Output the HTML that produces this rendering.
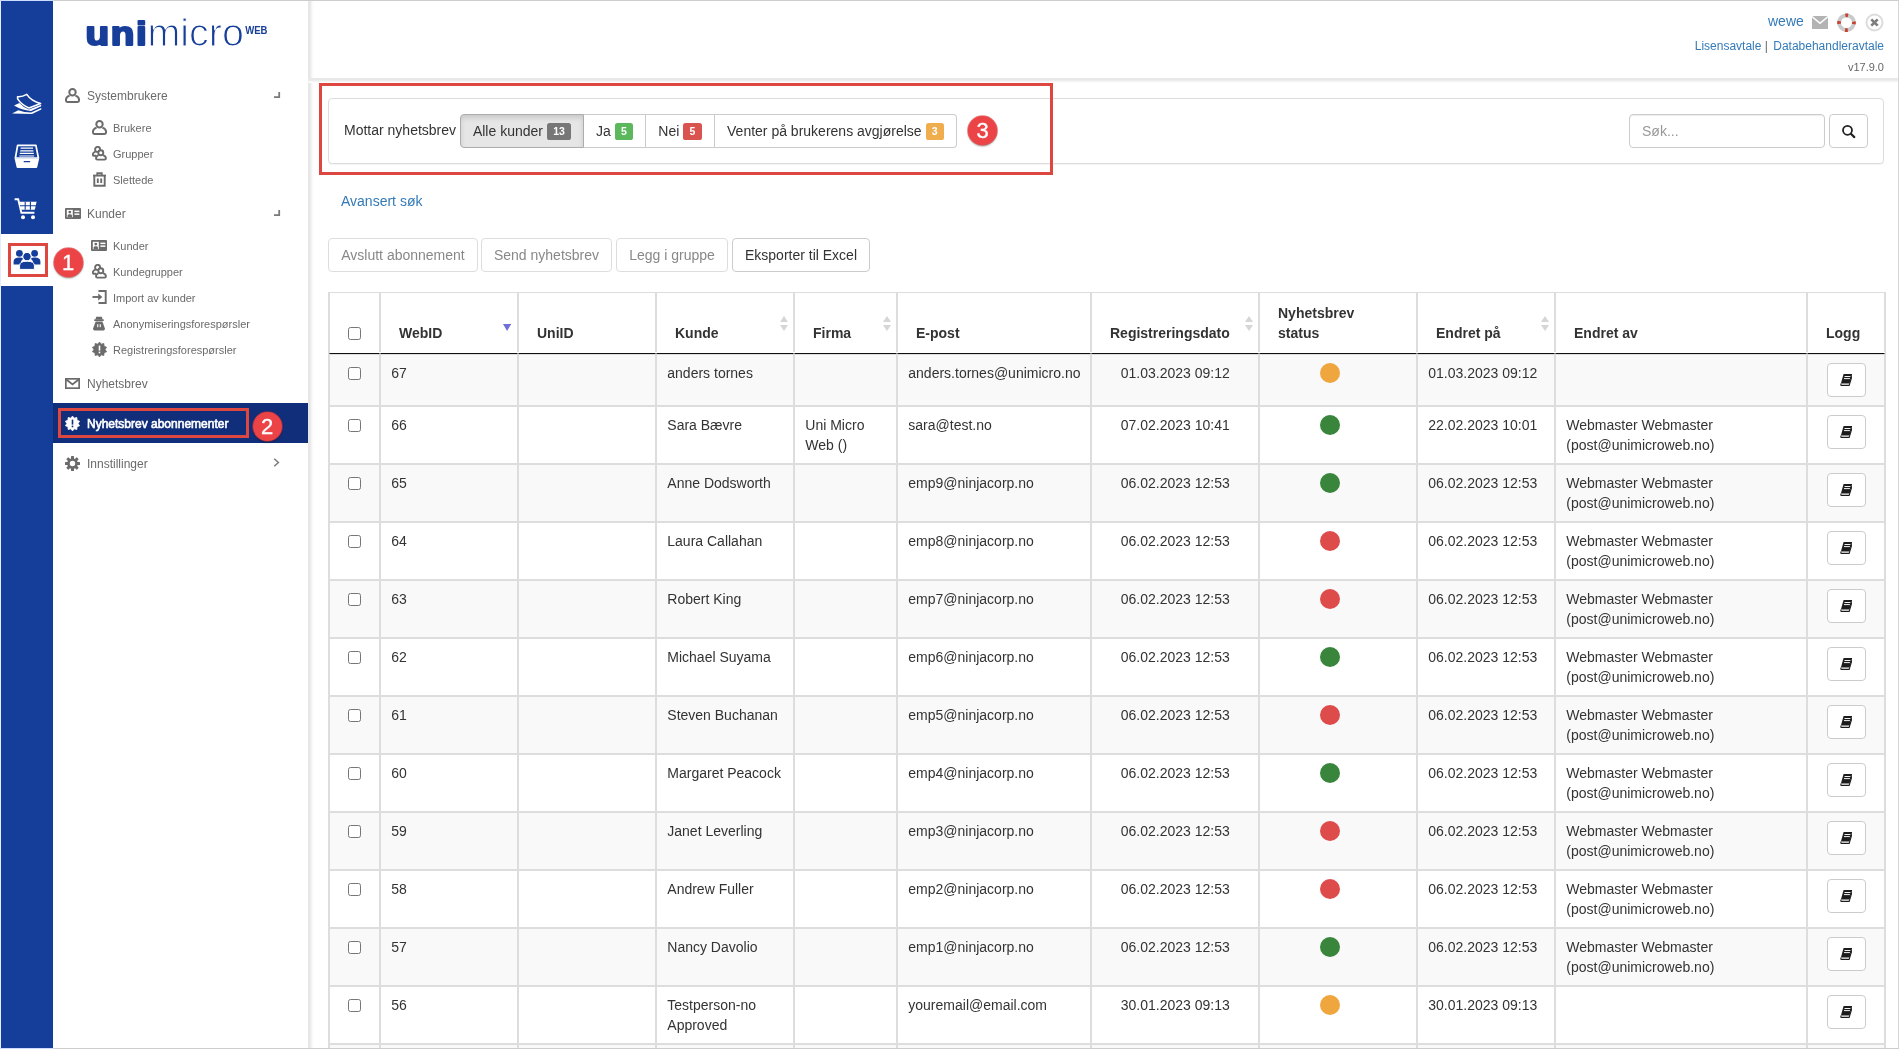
<!DOCTYPE html>
<html lang="no">
<head>
<meta charset="utf-8">
<title>Nyhetsbrev abonnementer</title>
<style>
*{box-sizing:border-box}
html,body{margin:0;padding:0}
body{width:1899px;height:1049px;overflow:hidden;background:#fff;font-family:"Liberation Sans",sans-serif;font-size:14px;line-height:20px;color:#333;position:relative}
a{color:#337ab7;text-decoration:none}
.abs{position:absolute;white-space:nowrap}
#frame{position:absolute;left:0;top:0;width:1899px;height:1049px;border:1px solid #cdcdcd;border-left-color:#e4ecff;border-right-color:#d6d6d6;pointer-events:none;z-index:50}
#frame i{position:absolute;left:-1px;width:54px;height:1px;background:#cbdcff}
#rail{position:absolute;left:1px;top:1px;width:52px;height:1047px;background:#153e9a}
#rail .act{position:absolute;left:0;top:233px;width:52px;height:52px;background:#fff}
#rail .ic{margin-left:-1px;margin-top:-1px}
#rail .redbox{margin-left:0}
#side{position:absolute;left:53px;top:1px;width:255px;height:1048px;background:#fff}
#sideedge{position:absolute;left:308px;top:1px;width:6px;height:1048px;background:linear-gradient(90deg,#e7e7e7 0,#e7e7e7 33%,#f0f0f0 50%,#f8f8f8 67%,#fcfcfc 84%,#fff 100%)}
#hdr{position:absolute;left:308px;top:78px;width:1590px;height:5px;background:linear-gradient(180deg,#e8e8e8 0,#e8e8e8 40%,#f1f1f1 60%,#f9f9f9 80%,#fff 100%)}
.logo{position:absolute;left:86px;top:6px;height:50px;line-height:50px;font-size:37px;color:#173f9a;white-space:nowrap;letter-spacing:0}
.logo .uni{font-weight:bold;-webkit-text-stroke:2.2px #173f9a;letter-spacing:1.2px}
.logo .micro{-webkit-text-stroke:1.7px #fff;margin-left:2px}
.logo .web{font-size:9.5px;font-weight:bold;position:relative;top:-13px;margin-left:3px}
.m1{position:absolute;left:87px;font-size:12px;color:#6a6a6a;line-height:16px;white-space:nowrap}
.m2{position:absolute;left:113px;font-size:11px;color:#6a6a6a;line-height:14px;white-space:nowrap}
.actbar{position:absolute;left:53px;top:403px;width:255px;height:40px;background:#102e7a}
.actt{color:#fff;-webkit-text-stroke:.6px #fff}
.ic{position:absolute}
.redbox{position:absolute;border:3px solid #de4640}
.rc{position:absolute;width:29px;height:29px;border-radius:50%;background:#ec4446;color:#fff;font-size:22px;line-height:30px;text-align:center;box-shadow:0 0 0 .8px rgba(210,50,50,.6),0 1.5px 2px rgba(0,0,0,.32);-webkit-text-stroke:.35px #fff}
.well{position:absolute;left:328px;top:98px;width:1556px;height:66px;border:1px solid #ddd;border-radius:4px;background:#fff;box-shadow:0 1px 1px rgba(0,0,0,.05)}
.bg{position:absolute;left:460px;top:114px;height:34px;white-space:nowrap;font-size:0}
.bg .b{display:inline-block;height:34px;border:1px solid #ccc;border-left-width:0;background:#fff;font-size:14px;line-height:20px;padding:6px 0;text-align:center;vertical-align:top}
.bg .b.act{border-left-width:1px;border-color:#adadad;background:#e6e6e6;border-radius:4px 0 0 4px;box-shadow:inset 0 3px 5px rgba(0,0,0,.125)}
.bg .b.last{border-radius:0 4px 4px 0}
.inp{position:absolute;left:1629px;top:114px;width:196px;height:34px;border:1px solid #ccc;border-radius:4px;padding:6px 12px;color:#999;box-shadow:inset 0 1px 1px rgba(0,0,0,.075)}
.btn{position:absolute;height:34px;border:1px solid #ccc;border-radius:4px;background:#fff;color:#333;font-size:14px;line-height:20px;padding:6px 0;text-align:center;white-space:nowrap}
.btn.dis{color:#888;border-color:#ddd}
.lab{display:inline-block;font-size:10.5px;font-weight:bold;color:#fff;line-height:10.5px;padding:3.1px 6.3px 3.15px;border-radius:2.6px;position:relative;top:-1px}
table{position:absolute;left:328px;top:292px;width:1558px;border-collapse:separate;border-spacing:0;border-top:1px solid #ddd;border-left:1px solid #ddd;border-right:1px solid #ddd;table-layout:fixed}
th,td{border:1px solid #ddd;vertical-align:top;text-align:left;overflow:hidden}
th{border-top:0;border-bottom:1px solid #111;padding:10px 18px;vertical-align:bottom;font-weight:bold;height:61px;position:relative;white-space:nowrap}
th.pad0{padding-left:0;padding-right:0}
td{padding:8px 9.7px 8px 10.3px;height:58px}
td:first-child{padding-left:10px;padding-right:10px}
tr.r1 td{height:52px}
tbody tr:nth-child(odd) td{background:#f9f9f9}
td.c{text-align:center}
.cb{display:block;width:13px;height:13px;border:1px solid #767676;border-radius:2.5px;background:#fff;margin:4px auto 0}
.dot{display:block;width:20px;height:20px;border-radius:50%;margin-left:49.7px;margin-top:0}
.g{background:#38853b}.r{background:#dd4b4b}.o{background:#f0a63f}
.lb{display:block;width:39px;height:34px;border:1px solid #ccc;border-radius:4px;background:#fff;margin:0 0 0 8.7px;position:relative}
.srt{position:absolute;right:5px;top:23px}
.wl{position:absolute;left:330px;top:352px;width:1555px;height:1px;background:#fff;z-index:3}
#wrap{position:absolute;left:0;top:0;width:1899px;height:1049px;will-change:transform}
</style>
</head>
<body>
<div id="wrap">
<div id="rail"><div class="act"></div>
<svg class="ic" style="left:10px;top:90px" width="34" height="28" viewBox="10 90 34 28"><path d="M17.5 96.7Q22 97.2 26.8 94.4Q31 101 40.6 103.5L29 108Q22 105 18.7 100.4Q17 98.2 17.5 96.7Z" fill="none" stroke="#fff" stroke-width="1.5" stroke-linejoin="round"/><path d="M14 105.6L19.4 102.9Q23 107.2 29 109.5L41.2 104.7V106.2L31 111Q22 110.4 14 105.6Z" fill="#fff"/><path d="M12 113.6L18.4 110.2Q24 112.4 31 112.6L41.3 108V109.6L32 113.9Z" fill="#fff"/></svg>
<svg class="ic" style="left:12px;top:142px" width="30" height="28" viewBox="12 142 30 28"><path d="M17.6 145.3H35.9L38.4 158H15.4Z" fill="none" stroke="#fff" stroke-width="1.7" stroke-linejoin="round"/><path d="M20.6 148.2H33M20.2 150.8H33.4M19.8 153.4H33.8M19.4 156H34.2" stroke="#fff" stroke-width="1.2"/><path d="M14.6 158.4H39.2L37.2 167.2Q37 167.9 36.2 167.9H17.6Q16.8 167.9 16.6 167.2Z" fill="#fff"/><rect x="23.6" y="161" width="6.6" height="1.3" rx=".6" fill="#153e9a"/></svg>
<svg class="ic" style="left:14px;top:198px" width="24" height="22" viewBox="0 0 24 22"><path d="M.6 1.2H4.2L7.4 14.8H20.4" fill="none" stroke="#fff" stroke-width="1.9"/><path d="M5.4 3.8H22.6L20.8 11.8H7.2Z" fill="#fff"/><g stroke="#153e9a" stroke-width="1.1"><path d="M6 7.8H22M11.2 3.8V11.8M16.4 3.8V11.8"/></g><circle cx="9" cy="19.2" r="2" fill="#fff"/><circle cx="19" cy="19.2" r="2" fill="#fff"/></svg>
<svg class="ic" style="left:13px;top:249px" width="28" height="21" viewBox="0 0 28 21"><g fill="#153e9a"><circle cx="6.4" cy="4.4" r="3.4"/><circle cx="21.6" cy="4.4" r="3.4"/><path d="M.6 15.4V12.4Q.6 8.6 6.4 8.6Q9 8.6 10.4 9.6Q7.6 11.6 7.4 15.4Z"/><path d="M27.4 15.4V12.4Q27.4 8.6 21.6 8.6Q19 8.6 17.6 9.6Q20.4 11.6 20.6 15.4Z"/><circle cx="14" cy="7.6" r="4.2" stroke="#fff" stroke-width="1"/><path d="M6.6 20.4V16.6Q6.6 12.2 14 12.2Q21.4 12.2 21.4 16.6V20.4Z" stroke="#fff" stroke-width="1"/></g></svg>
<div class="redbox" style="left:7px;top:242px;width:40px;height:34px"></div>
</div>
<div id="side"></div>
<div id="sideedge"></div>
<svg style="position:absolute;left:80px;top:5px" width="200" height="55" viewBox="80 5 200 55" font-family="Liberation Sans, sans-serif"><text transform="translate(85.6,44.6) scale(1.14,1)" font-weight="bold" font-size="34" letter-spacing="1.4" fill="#173f9a" stroke="#173f9a" stroke-width="2.1" stroke-linejoin="round">uni</text><text transform="translate(147.5,45.6) scale(0.998,1)" font-size="39.5" fill="#173f9a" stroke="#fff" stroke-width="1.15">micro</text><text transform="translate(245.2,34.2) scale(0.93,1)" font-weight="bold" font-size="10.3" fill="#173f9a">WEB</text></svg>
<svg class="ic" style="left:65px;top:88px" width="15" height="15" viewBox="0 0 15 15"><circle cx="7.5" cy="4.3" r="3.2" fill="none" stroke="#6b6b6b" stroke-width="2"/><path d="M4.6 7.6C2.4 8.3 1 9.8 1 11.6V12.6Q1 13.9 2.3 13.9H12.7Q14 13.9 14 12.6V11.6C14 9.8 12.6 8.3 10.4 7.6" fill="none" stroke="#6b6b6b" stroke-width="2"/></svg>
<div class="m1" style="top:88px">Systembrukere</div>
<svg class="ic" style="left:274px;top:92px" width="7" height="7" viewBox="0 0 7 7"><path d="M5.2 0V5.2H0" fill="none" stroke="#7a7a7a" stroke-width="1.8"/></svg>
<svg class="ic" style="left:92px;top:120px" width="15" height="15" viewBox="0 0 15 15"><circle cx="7.5" cy="4.3" r="3.2" fill="none" stroke="#6b6b6b" stroke-width="2"/><path d="M4.6 7.6C2.4 8.3 1 9.8 1 11.6V12.6Q1 13.9 2.3 13.9H12.7Q14 13.9 14 12.6V11.6C14 9.8 12.6 8.3 10.4 7.6" fill="none" stroke="#6b6b6b" stroke-width="2"/></svg>
<div class="m2" style="top:121px">Brukere</div>
<svg class="ic" style="left:92px;top:146px" width="15" height="15" viewBox="0 0 15 15"><g fill="none" stroke="#6b6b6b" stroke-width="1.9"><circle cx="5.6" cy="3.4" r="2.5"/><path d="M3.4 5.6C1.7 6.2 .8 7.3 .8 8.6Q.8 9.8 2 9.8H4.2"/><circle cx="8.8" cy="6.8" r="2.5" fill="#fff"/><path d="M6.6 9.2C5 9.8 4 10.8 4 12.2Q4 13.6 5.3 13.6H12.6Q13.9 13.6 13.9 12.2C13.9 10.8 12.8 9.8 11 9.2"/></g></svg>
<div class="m2" style="top:147px">Grupper</div>
<svg class="ic" style="left:92px;top:172px" width="15" height="15" viewBox="0 0 15 15"><g fill="none" stroke="#6b6b6b" stroke-width="1.9"><path d="M1 3.6H14"/><path d="M5.3 3.4V1.2H9.7V3.4"/><path d="M2.3 3.8V13.8H12.7V3.8"/><path d="M5.8 6.6V11M9.2 6.6V11"/></g></svg>
<div class="m2" style="top:173px">Slettede</div>
<svg class="ic" style="left:65px;top:208px" width="16" height="11" viewBox="0 0 16 11"><rect x="0" y="0" width="16" height="11" rx="1" fill="#6b6b6b"/><rect x="1.8" y="1.8" width="6" height="7.4" fill="#fff"/><circle cx="4.8" cy="4.1" r="1.4" fill="#6b6b6b"/><path d="M2.6 9.2V7.6Q2.6 6.2 4.8 6.2Q7 6.2 7 7.6V9.2Z" fill="#6b6b6b"/><rect x="9.4" y="2.6" width="5" height="1.5" fill="#fff"/><rect x="9.4" y="5.4" width="5" height="1.5" fill="#fff"/></svg>
<div class="m1" style="top:206px">Kunder</div>
<svg class="ic" style="left:274px;top:210px" width="7" height="7" viewBox="0 0 7 7"><path d="M5.2 0V5.2H0" fill="none" stroke="#7a7a7a" stroke-width="1.8"/></svg>
<svg class="ic" style="left:91px;top:240px" width="16" height="11" viewBox="0 0 16 11"><rect x="0" y="0" width="16" height="11" rx="1" fill="#6b6b6b"/><rect x="1.8" y="1.8" width="6" height="7.4" fill="#fff"/><circle cx="4.8" cy="4.1" r="1.4" fill="#6b6b6b"/><path d="M2.6 9.2V7.6Q2.6 6.2 4.8 6.2Q7 6.2 7 7.6V9.2Z" fill="#6b6b6b"/><rect x="9.4" y="2.6" width="5" height="1.5" fill="#fff"/><rect x="9.4" y="5.4" width="5" height="1.5" fill="#fff"/></svg>
<div class="m2" style="top:239px">Kunder</div>
<svg class="ic" style="left:92px;top:264px" width="15" height="15" viewBox="0 0 15 15"><g fill="none" stroke="#6b6b6b" stroke-width="1.9"><circle cx="5.6" cy="3.4" r="2.5"/><path d="M3.4 5.6C1.7 6.2 .8 7.3 .8 8.6Q.8 9.8 2 9.8H4.2"/><circle cx="8.8" cy="6.8" r="2.5" fill="#fff"/><path d="M6.6 9.2C5 9.8 4 10.8 4 12.2Q4 13.6 5.3 13.6H12.6Q13.9 13.6 13.9 12.2C13.9 10.8 12.8 9.8 11 9.2"/></g></svg>
<div class="m2" style="top:265px">Kundegrupper</div>
<svg class="ic" style="left:92px;top:290px" width="15" height="14" viewBox="0 0 15 14"><g fill="none" stroke="#6b6b6b" stroke-width="1.9"><path d="M6.5 1H13.7V13H6.5"/><path d="M0.5 7H8.5"/></g><path d="M6.2 3.4L10.4 7L6.2 10.6Z" fill="#6b6b6b"/></svg>
<div class="m2" style="top:291px">Import av kunder</div>
<svg class="ic" style="left:92px;top:316px" width="14" height="15" viewBox="0 0 14 15"><path d="M4.2 .8H9.8L10.6 3.6H3.4Z" fill="#6b6b6b"/><rect x="2.2" y="3.2" width="9.6" height="1.8" rx=".6" fill="#6b6b6b"/><path d="M3.6 5.6H10.4L12.9 12.6Q13.2 14.4 11.6 14.4H2.4Q.8 14.4 1.1 12.6Z" fill="#6b6b6b"/><rect x="5.2" y="8.2" width="1.1" height="3" fill="#fff"/><rect x="7.7" y="8.2" width="1.1" height="3" fill="#fff"/></svg>
<div class="m2" style="top:317px">Anonymiseringsforespørsler</div>
<svg class="ic" style="left:92px;top:342px" width="15" height="15" viewBox="0 0 15 15"><polygon points="7.50,0.10 9.23,2.17 11.85,1.51 12.03,4.21 14.54,5.21 13.10,7.50 14.54,9.79 12.03,10.79 11.85,13.49 9.23,12.83 7.50,14.90 5.77,12.83 3.15,13.49 2.97,10.79 0.46,9.79 1.90,7.50 0.46,5.21 2.97,4.21 3.15,1.51 5.77,2.17" fill="#6b6b6b" stroke="#6b6b6b" stroke-width=".8" stroke-linejoin="round"/><rect x="6.7" y="3.6" width="1.6" height="5" fill="#fff"/><rect x="6.7" y="9.6" width="1.6" height="1.7" fill="#fff"/></svg>
<div class="m2" style="top:343px">Registreringsforespørsler</div>
<svg class="ic" style="left:65px;top:378px" width="15" height="11" viewBox="0 0 15 11"><g fill="none" stroke="#6b6b6b" stroke-width="1.9"><rect x=".75" y=".75" width="13.5" height="9.5"/><path d="M1 1.2L7.5 6.4L14 1.2"/></g></svg>
<div class="m1" style="top:376px">Nyhetsbrev</div>
<div class="actbar"></div>
<svg class="ic" style="left:65px;top:416px" width="15" height="15" viewBox="0 0 15 15"><polygon points="7.50,0.10 9.23,2.17 11.85,1.51 12.03,4.21 14.54,5.21 13.10,7.50 14.54,9.79 12.03,10.79 11.85,13.49 9.23,12.83 7.50,14.90 5.77,12.83 3.15,13.49 2.97,10.79 0.46,9.79 1.90,7.50 0.46,5.21 2.97,4.21 3.15,1.51 5.77,2.17" fill="#fff" stroke="#fff" stroke-width=".8" stroke-linejoin="round"/><rect x="6.7" y="3.6" width="1.6" height="5" fill="#102e7a"/><rect x="6.7" y="9.6" width="1.6" height="1.7" fill="#102e7a"/></svg>
<div class="m1 actt" style="top:416px">Nyhetsbrev abonnementer</div>
<div class="redbox" style="left:58px;top:408px;width:191px;height:30px"></div>
<div class="rc" style="left:252.5px;top:411.5px">2</div>
<svg class="ic" style="left:65px;top:456px" width="15" height="15" viewBox="0 0 15 15"><rect x="6" y="0" width="3" height="4" rx=".5" transform="rotate(0 7.5 7.5)" fill="#6b6b6b"/><rect x="6" y="0" width="3" height="4" rx=".5" transform="rotate(45 7.5 7.5)" fill="#6b6b6b"/><rect x="6" y="0" width="3" height="4" rx=".5" transform="rotate(90 7.5 7.5)" fill="#6b6b6b"/><rect x="6" y="0" width="3" height="4" rx=".5" transform="rotate(135 7.5 7.5)" fill="#6b6b6b"/><rect x="6" y="0" width="3" height="4" rx=".5" transform="rotate(180 7.5 7.5)" fill="#6b6b6b"/><rect x="6" y="0" width="3" height="4" rx=".5" transform="rotate(225 7.5 7.5)" fill="#6b6b6b"/><rect x="6" y="0" width="3" height="4" rx=".5" transform="rotate(270 7.5 7.5)" fill="#6b6b6b"/><rect x="6" y="0" width="3" height="4" rx=".5" transform="rotate(315 7.5 7.5)" fill="#6b6b6b"/><circle cx="7.5" cy="7.5" r="4" fill="none" stroke="#6b6b6b" stroke-width="2.6"/></svg>
<div class="m1" style="top:456px">Innstillinger</div>
<svg class="ic" style="left:273px;top:458px" width="7" height="9" viewBox="0 0 7 9"><path d="M1.2 .8L5.4 4.5L1.2 8.2" fill="none" stroke="#7a7a7a" stroke-width="1.5"/></svg>
<div class="rc" style="left:53.5px;top:247.5px">1</div>
<div id="hdr"></div>
<a class="abs" style="left:1768px;top:11px;font-size:14px;line-height:20px">wewe</a>
<svg class="ic" style="left:1812px;top:16px" width="16" height="13" viewBox="0 0 16 13"><rect width="16" height="13" fill="#b3b3b3"/><path d="M0 .6L8 7.4L16 .6" fill="none" stroke="#fff" stroke-width="1.4"/></svg>
<svg class="ic" style="left:1836px;top:12px" width="21" height="21" viewBox="0 0 21 21"><circle cx="10.5" cy="10.7" r="7.4" fill="none" stroke="#c9c9c9" stroke-width="3.8"/><circle cx="10.5" cy="10.7" r="7.4" fill="none" stroke="#c8402f" stroke-width="3.8" stroke-dasharray="2.8 8.824" stroke-dashoffset="1.4"/></svg>
<svg class="ic" style="left:1865px;top:13px" width="19" height="19" viewBox="0 0 19 19"><circle cx="9.5" cy="9.5" r="8" fill="#fff" stroke="#dcdcdc" stroke-width="2"/><path d="M6.3 6.3L12.7 12.7M12.7 6.3L6.3 12.7" stroke="#7d7d7d" stroke-width="2.6"/></svg>
<div class="abs" style="right:15px;top:38px;font-size:12px;line-height:17px;white-space:nowrap;color:#666"><a>Lisensavtale</a> | <a style="margin-left:2px">Databehandleravtale</a></div>
<div class="abs" style="right:15px;top:60px;font-size:11px;line-height:14px;color:#666">v17.9.0</div>
<div class="well"></div>
<div class="abs" style="left:344px;top:120px">Mottar nyhetsbrev</div>
<div class="bg"><span class="b act" style="width:124px">Alle kunder <span class="lab" style="background:#777">13</span></span><span class="b" style="width:62px">Ja <span class="lab" style="background:#5cb85c">5</span></span><span class="b" style="width:69px">Nei <span class="lab" style="background:#d9534f">5</span></span><span class="b last" style="width:242px">Venter på brukerens avgjørelse <span class="lab" style="background:#f0ad4e">3</span></span></div>
<div class="rc" style="left:968px;top:116px">3</div>
<div class="redbox" style="left:319px;top:83px;width:734px;height:92px"></div>
<div class="inp">Søk...</div>
<div class="btn" style="left:1829px;top:114px;width:39px;padding:0"><svg class="ic" style="left:12px;top:9px" width="15" height="15" viewBox="0 0 15 15"><circle cx="5.5" cy="6.3" r="4.5" fill="none" stroke="#222" stroke-width="1.8"/><path d="M8.9 9.8L12.3 13.1" stroke="#222" stroke-width="2.2" stroke-linecap="round"/></svg></div>
<a class="abs" style="left:341px;top:191px">Avansert søk</a>
<div class="btn dis" style="left:328px;top:238px;width:150px">Avslutt abonnement</div>
<div class="btn dis" style="left:481px;top:238px;width:131px">Send nyhetsbrev</div>
<div class="btn dis" style="left:616px;top:238px;width:112px">Legg i gruppe</div>
<div class="btn" style="left:732px;top:238px;width:138px">Eksporter til Excel</div>
<table><colgroup><col style="width:51px"><col style="width:138px"><col style="width:138px"><col style="width:138px"><col style="width:103px"><col style="width:194px"><col style="width:168px"><col style="width:158px"><col style="width:138px"><col style="width:252px"><col style="width:78px"></colgroup><thead><tr><th class="pad0"><span class="cb" style="margin-top:0;margin-bottom:3px"></span></th><th class="">WebID<svg class="srt" style="top:31px;right:6px" width="8.2" height="7.6" viewBox="0 0 9 8" preserveAspectRatio="none"><path d="M0 0H9L4.5 7.4Z" fill="#6f6fd6"/></svg></th><th class="">UniID</th><th class="">Kunde<svg class="srt" width="8" height="15" viewBox="0 0 8 15"><path d="M4 0L8 6H0Z" fill="#d6d6d6"/><path d="M4 15L8 9H0Z" fill="#d6d6d6"/></svg></th><th class="">Firma<svg class="srt" width="8" height="15" viewBox="0 0 8 15"><path d="M4 0L8 6H0Z" fill="#d6d6d6"/><path d="M4 15L8 9H0Z" fill="#d6d6d6"/></svg></th><th class="">E-post</th><th class="">Registreringsdato<svg class="srt" width="8" height="15" viewBox="0 0 8 15"><path d="M4 0L8 6H0Z" fill="#d6d6d6"/><path d="M4 15L8 9H0Z" fill="#d6d6d6"/></svg></th><th class="">Nyhetsbrev<br>status</th><th class="">Endret på<svg class="srt" width="8" height="15" viewBox="0 0 8 15"><path d="M4 0L8 6H0Z" fill="#d6d6d6"/><path d="M4 15L8 9H0Z" fill="#d6d6d6"/></svg></th><th class="">Endret av</th><th class="">Logg</th></tr></thead><tbody>
<tr class="r1"><td><span class="cb"></span></td><td>67</td><td></td><td>anders tornes</td><td></td><td>anders.tornes@unimicro.no</td><td class="c">01.03.2023 09:12</td><td><span class="dot o"></span></td><td>01.03.2023 09:12</td><td></td><td><span class="lb"><svg width="12.6" height="12" viewBox="0 0 14 12" preserveAspectRatio="none" style="position:absolute;left:11.6px;top:10px"><path d="M4 0H13.6L10.6 9.4H1Z" fill="#1c1c1c"/><path d="M5 2.5H11.6M4.4 4.6H11" stroke="#fff" stroke-width="1"/><path d="M.8 9.6L1.2 11.4H10.2L13.4 2" fill="none" stroke="#1c1c1c" stroke-width="1.2"/></svg></span></td></tr>
<tr><td><span class="cb"></span></td><td>66</td><td></td><td>Sara Bævre</td><td>Uni Micro Web ()</td><td>sara@test.no</td><td class="c">07.02.2023 10:41</td><td><span class="dot g"></span></td><td>22.02.2023 10:01</td><td>Webmaster Webmaster (post@unimicroweb.no)</td><td><span class="lb"><svg width="12.6" height="12" viewBox="0 0 14 12" preserveAspectRatio="none" style="position:absolute;left:11.6px;top:10px"><path d="M4 0H13.6L10.6 9.4H1Z" fill="#1c1c1c"/><path d="M5 2.5H11.6M4.4 4.6H11" stroke="#fff" stroke-width="1"/><path d="M.8 9.6L1.2 11.4H10.2L13.4 2" fill="none" stroke="#1c1c1c" stroke-width="1.2"/></svg></span></td></tr>
<tr><td><span class="cb"></span></td><td>65</td><td></td><td>Anne Dodsworth</td><td></td><td>emp9@ninjacorp.no</td><td class="c">06.02.2023 12:53</td><td><span class="dot g"></span></td><td>06.02.2023 12:53</td><td>Webmaster Webmaster (post@unimicroweb.no)</td><td><span class="lb"><svg width="12.6" height="12" viewBox="0 0 14 12" preserveAspectRatio="none" style="position:absolute;left:11.6px;top:10px"><path d="M4 0H13.6L10.6 9.4H1Z" fill="#1c1c1c"/><path d="M5 2.5H11.6M4.4 4.6H11" stroke="#fff" stroke-width="1"/><path d="M.8 9.6L1.2 11.4H10.2L13.4 2" fill="none" stroke="#1c1c1c" stroke-width="1.2"/></svg></span></td></tr>
<tr><td><span class="cb"></span></td><td>64</td><td></td><td>Laura Callahan</td><td></td><td>emp8@ninjacorp.no</td><td class="c">06.02.2023 12:53</td><td><span class="dot r"></span></td><td>06.02.2023 12:53</td><td>Webmaster Webmaster (post@unimicroweb.no)</td><td><span class="lb"><svg width="12.6" height="12" viewBox="0 0 14 12" preserveAspectRatio="none" style="position:absolute;left:11.6px;top:10px"><path d="M4 0H13.6L10.6 9.4H1Z" fill="#1c1c1c"/><path d="M5 2.5H11.6M4.4 4.6H11" stroke="#fff" stroke-width="1"/><path d="M.8 9.6L1.2 11.4H10.2L13.4 2" fill="none" stroke="#1c1c1c" stroke-width="1.2"/></svg></span></td></tr>
<tr><td><span class="cb"></span></td><td>63</td><td></td><td>Robert King</td><td></td><td>emp7@ninjacorp.no</td><td class="c">06.02.2023 12:53</td><td><span class="dot r"></span></td><td>06.02.2023 12:53</td><td>Webmaster Webmaster (post@unimicroweb.no)</td><td><span class="lb"><svg width="12.6" height="12" viewBox="0 0 14 12" preserveAspectRatio="none" style="position:absolute;left:11.6px;top:10px"><path d="M4 0H13.6L10.6 9.4H1Z" fill="#1c1c1c"/><path d="M5 2.5H11.6M4.4 4.6H11" stroke="#fff" stroke-width="1"/><path d="M.8 9.6L1.2 11.4H10.2L13.4 2" fill="none" stroke="#1c1c1c" stroke-width="1.2"/></svg></span></td></tr>
<tr><td><span class="cb"></span></td><td>62</td><td></td><td>Michael Suyama</td><td></td><td>emp6@ninjacorp.no</td><td class="c">06.02.2023 12:53</td><td><span class="dot g"></span></td><td>06.02.2023 12:53</td><td>Webmaster Webmaster (post@unimicroweb.no)</td><td><span class="lb"><svg width="12.6" height="12" viewBox="0 0 14 12" preserveAspectRatio="none" style="position:absolute;left:11.6px;top:10px"><path d="M4 0H13.6L10.6 9.4H1Z" fill="#1c1c1c"/><path d="M5 2.5H11.6M4.4 4.6H11" stroke="#fff" stroke-width="1"/><path d="M.8 9.6L1.2 11.4H10.2L13.4 2" fill="none" stroke="#1c1c1c" stroke-width="1.2"/></svg></span></td></tr>
<tr><td><span class="cb"></span></td><td>61</td><td></td><td>Steven Buchanan</td><td></td><td>emp5@ninjacorp.no</td><td class="c">06.02.2023 12:53</td><td><span class="dot r"></span></td><td>06.02.2023 12:53</td><td>Webmaster Webmaster (post@unimicroweb.no)</td><td><span class="lb"><svg width="12.6" height="12" viewBox="0 0 14 12" preserveAspectRatio="none" style="position:absolute;left:11.6px;top:10px"><path d="M4 0H13.6L10.6 9.4H1Z" fill="#1c1c1c"/><path d="M5 2.5H11.6M4.4 4.6H11" stroke="#fff" stroke-width="1"/><path d="M.8 9.6L1.2 11.4H10.2L13.4 2" fill="none" stroke="#1c1c1c" stroke-width="1.2"/></svg></span></td></tr>
<tr><td><span class="cb"></span></td><td>60</td><td></td><td>Margaret Peacock</td><td></td><td>emp4@ninjacorp.no</td><td class="c">06.02.2023 12:53</td><td><span class="dot g"></span></td><td>06.02.2023 12:53</td><td>Webmaster Webmaster (post@unimicroweb.no)</td><td><span class="lb"><svg width="12.6" height="12" viewBox="0 0 14 12" preserveAspectRatio="none" style="position:absolute;left:11.6px;top:10px"><path d="M4 0H13.6L10.6 9.4H1Z" fill="#1c1c1c"/><path d="M5 2.5H11.6M4.4 4.6H11" stroke="#fff" stroke-width="1"/><path d="M.8 9.6L1.2 11.4H10.2L13.4 2" fill="none" stroke="#1c1c1c" stroke-width="1.2"/></svg></span></td></tr>
<tr><td><span class="cb"></span></td><td>59</td><td></td><td>Janet Leverling</td><td></td><td>emp3@ninjacorp.no</td><td class="c">06.02.2023 12:53</td><td><span class="dot r"></span></td><td>06.02.2023 12:53</td><td>Webmaster Webmaster (post@unimicroweb.no)</td><td><span class="lb"><svg width="12.6" height="12" viewBox="0 0 14 12" preserveAspectRatio="none" style="position:absolute;left:11.6px;top:10px"><path d="M4 0H13.6L10.6 9.4H1Z" fill="#1c1c1c"/><path d="M5 2.5H11.6M4.4 4.6H11" stroke="#fff" stroke-width="1"/><path d="M.8 9.6L1.2 11.4H10.2L13.4 2" fill="none" stroke="#1c1c1c" stroke-width="1.2"/></svg></span></td></tr>
<tr><td><span class="cb"></span></td><td>58</td><td></td><td>Andrew Fuller</td><td></td><td>emp2@ninjacorp.no</td><td class="c">06.02.2023 12:53</td><td><span class="dot r"></span></td><td>06.02.2023 12:53</td><td>Webmaster Webmaster (post@unimicroweb.no)</td><td><span class="lb"><svg width="12.6" height="12" viewBox="0 0 14 12" preserveAspectRatio="none" style="position:absolute;left:11.6px;top:10px"><path d="M4 0H13.6L10.6 9.4H1Z" fill="#1c1c1c"/><path d="M5 2.5H11.6M4.4 4.6H11" stroke="#fff" stroke-width="1"/><path d="M.8 9.6L1.2 11.4H10.2L13.4 2" fill="none" stroke="#1c1c1c" stroke-width="1.2"/></svg></span></td></tr>
<tr><td><span class="cb"></span></td><td>57</td><td></td><td>Nancy Davolio</td><td></td><td>emp1@ninjacorp.no</td><td class="c">06.02.2023 12:53</td><td><span class="dot g"></span></td><td>06.02.2023 12:53</td><td>Webmaster Webmaster (post@unimicroweb.no)</td><td><span class="lb"><svg width="12.6" height="12" viewBox="0 0 14 12" preserveAspectRatio="none" style="position:absolute;left:11.6px;top:10px"><path d="M4 0H13.6L10.6 9.4H1Z" fill="#1c1c1c"/><path d="M5 2.5H11.6M4.4 4.6H11" stroke="#fff" stroke-width="1"/><path d="M.8 9.6L1.2 11.4H10.2L13.4 2" fill="none" stroke="#1c1c1c" stroke-width="1.2"/></svg></span></td></tr>
<tr><td><span class="cb"></span></td><td>56</td><td></td><td>Testperson-no Approved</td><td></td><td>youremail@email.com</td><td class="c">30.01.2023 09:13</td><td><span class="dot o"></span></td><td>30.01.2023 09:13</td><td></td><td><span class="lb"><svg width="12.6" height="12" viewBox="0 0 14 12" preserveAspectRatio="none" style="position:absolute;left:11.6px;top:10px"><path d="M4 0H13.6L10.6 9.4H1Z" fill="#1c1c1c"/><path d="M5 2.5H11.6M4.4 4.6H11" stroke="#fff" stroke-width="1"/><path d="M.8 9.6L1.2 11.4H10.2L13.4 2" fill="none" stroke="#1c1c1c" stroke-width="1.2"/></svg></span></td></tr>
<tr><td><span class="cb"></span></td><td>55</td><td></td><td></td><td></td><td></td><td class="c"></td><td></td><td></td><td></td><td></td></tr>
</tbody></table>
<div class="wl"></div>
<div id="frame"><i style="top:-1px"></i><i style="bottom:-1px"></i></div>
</div>
</body>
</html>
